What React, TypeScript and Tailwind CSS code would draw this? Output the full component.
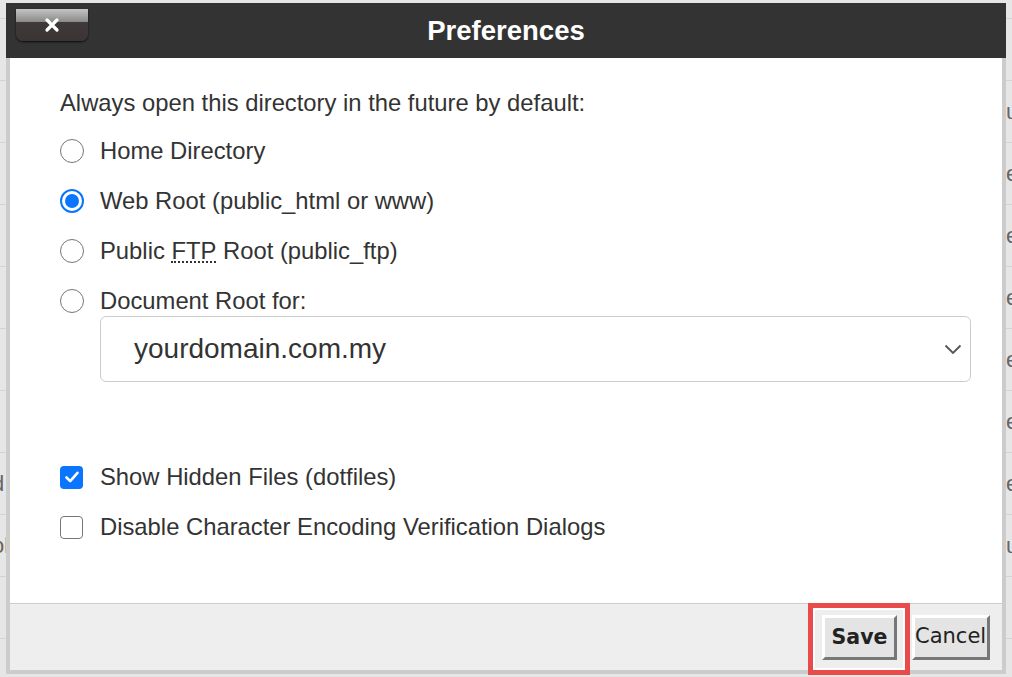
import React from "react";

const bgRows: { left?: string; right?: string }[] = [
  {},
  { right: "u" },
  { right: "es" },
  { right: "es" },
  { right: "es" },
  { right: "es" },
  { right: "es" },
  { left: "d", right: "es" },
  { left: "ol", right: "u" },
  {},
  {},
];

function Radio({ checked }: { checked?: boolean }) {
  if (checked) {
    return (
      <div className="w-[24px] h-[24px] rounded-full border-[2.5px] border-[#0a75ff] bg-white flex items-center justify-center shrink-0">
        <div className="w-[14px] h-[14px] rounded-full bg-[#0a75ff]" />
      </div>
    );
  }
  return <div className="w-[24px] h-[24px] rounded-full border-[1.5px] border-[#767676] bg-white shrink-0" />;
}

function Checkbox({ checked }: { checked?: boolean }) {
  if (checked) {
    return (
      <div className="w-[23px] h-[23px] rounded-[4px] bg-[#0a75ff] flex items-center justify-center shrink-0">
        <svg width="16" height="16" viewBox="0 0 16 16">
          <path d="M2.5 8.5 L6.2 12.2 L13.5 3.8" fill="none" stroke="white" strokeWidth="2.6" strokeLinecap="round" strokeLinejoin="round" />
        </svg>
      </div>
    );
  }
  return <div className="w-[23px] h-[23px] rounded-[4px] border-[1.5px] border-[#767676] bg-white shrink-0" />;
}

export default function App() {
  return (
    <div
      className="relative w-[1012px] h-[677px] overflow-hidden bg-[#e6e6e6]"
      style={{ fontFamily: '"Liberation Sans", Arial, sans-serif' }}
    >
      {/* background page rows */}
      <div className="flex flex-col">
        <div className="h-[19px] border-b border-[#d4d4d4]" />
        {bgRows.map((r, i) => (
          <div key={i} className="h-[62px] border-b border-[#d4d4d4] flex items-center justify-between text-[22px] text-[#666]">
            <span className="ml-[-8px]">{r.left ?? ""}</span>
            <span className="mr-[-14px] w-[20px]">{r.right ?? ""}</span>
          </div>
        ))}
      </div>

      {/* dialog */}
      <div className="absolute left-[6px] top-[3px] w-[1000px] h-[671px] flex flex-col">
        <div className="relative h-[55px] bg-[#333333] flex items-center justify-center shrink-0">
          <div className="absolute left-[10px] top-[6px] w-[72px] h-[32px] rounded-b-[7px] overflow-hidden shadow-[0_1px_2px_rgba(0,0,0,0.8)] bg-[linear-gradient(to_bottom,#c4c4c4_0%,#8a8a8a_40%,#3f3a39_42%,#3a3534_100%)] flex items-center justify-center">
            <svg width="16" height="16" viewBox="0 0 16 16">
              <path d="M3 3 L13 13 M13 3 L3 13" stroke="white" strokeWidth="3.2" strokeLinecap="round" />
            </svg>
          </div>
          <span className="text-white font-bold text-[27.5px] leading-none">Preferences</span>
        </div>

        <div className="flex-1 bg-white border-x-4 border-[#cccccc] pl-[50px] pt-[22px] text-[#333] text-[23.8px]">
          <div className="h-[46px] flex items-center">Always open this directory in the future by default:</div>
          <div className="h-[50px] flex items-center gap-[16px]">
            <Radio />
            <span>Home Directory</span>
          </div>
          <div className="h-[50px] flex items-center gap-[16px]">
            <Radio checked />
            <span>Web Root (public_html or www)</span>
          </div>
          <div className="h-[50px] flex items-center gap-[16px]">
            <Radio />
            <span>
              Public{" "}
              <abbr className="no-underline border-b-2 border-dotted border-[#333] leading-[20px] inline-block">FTP</abbr>{" "}
              Root (public_ftp)
            </span>
          </div>
          <div className="h-[30px] mt-[10px] flex items-center gap-[16px]">
            <Radio />
            <span>Document Root for:</span>
          </div>
          <div className="ml-[40px] w-[871px] h-[66px] rounded-[6px] border-[1.5px] border-[#cccccc] flex items-center justify-between pl-[33px] pr-[8px] text-[28px] text-[#333]">
            <span>yourdomain.com.my</span>
            <svg width="18" height="12" viewBox="0 0 18 12">
              <path d="M1.5 2.5 L9 10 L16.5 2.5" fill="none" stroke="#555" strokeWidth="1.8" />
            </svg>
          </div>
          <div className="h-[50px] mt-[70px] flex items-center gap-[17px]">
            <Checkbox checked />
            <span>Show Hidden Files (dotfiles)</span>
          </div>
          <div className="h-[50px] flex items-center gap-[17px]">
            <Checkbox />
            <span>Disable Character Encoding Verification Dialogs</span>
          </div>
        </div>

        <div
          className="h-[71px] shrink-0 bg-[#eeeeee] border-t border-[#cccccc] border-x-4 border-b-4 flex items-center justify-end pr-[12px] gap-[15px]"
          style={{ fontFamily: '"DejaVu Sans", Verdana, sans-serif' }}
        >
          <button className="w-[75px] h-[45px] bg-[#e4e4e4] border-[3px] border-t-white border-l-white border-r-[#777] border-b-[#777] text-[20.5px] font-bold text-[#222] flex items-center justify-center">
            Save
          </button>
          <button className="w-[78px] h-[45px] bg-[#e4e4e4] border-[3px] border-t-white border-l-white border-r-[#777] border-b-[#777] text-[21px] text-[#222] flex items-center justify-start overflow-hidden">
            Cancel
          </button>
        </div>
      </div>

      {/* highlight box around Save */}
      <div className="absolute left-[808px] top-[603px] w-[102px] h-[72px] border-[5px] border-[#e94b4b] shadow-[inset_0_0_0_2px_white]" />
    </div>
  );
}
